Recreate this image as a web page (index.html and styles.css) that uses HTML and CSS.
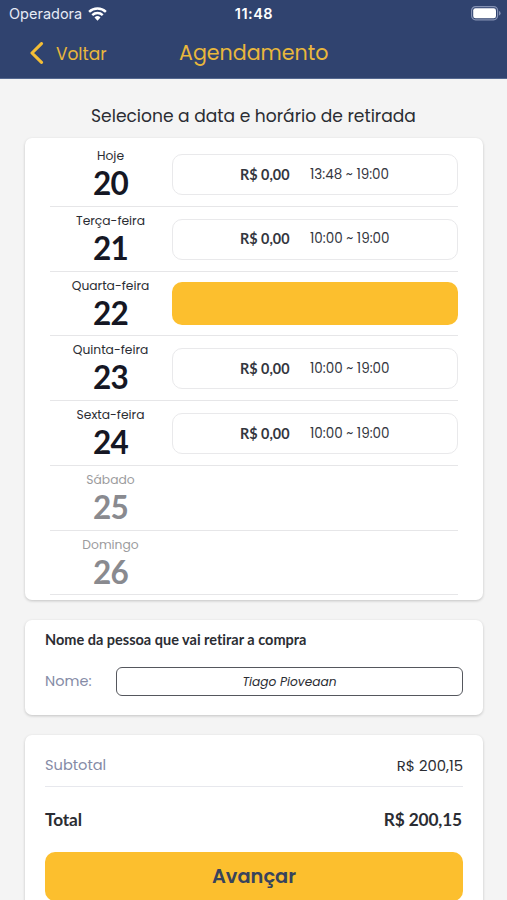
FILE: index.html
```html
<!DOCTYPE html>
<html lang="pt-BR">
<head>
<meta charset="utf-8">
<title>Agendamento</title>
<link rel="stylesheet" href="styles.css">
</head>
<body>
<header class="header">
  <div class="status">
    <div class="carrier"><span>Operadora</span>
      <svg class="wifi" viewBox="0 0 20 15" width="19" height="14"><g fill="none" stroke="#fff" stroke-width="2.6"><path d="M1 5.2a13 13 0 0 1 18 0"/><path d="M4.4 8.8a8 8 0 0 1 11.2 0"/></g><path d="M10 14.6 6.800 11.300a4.600 4.600 0 0 1 6.400 0z" fill="#fff"/></svg>
    </div>
    <div class="clock">11:48</div>
    <svg class="battery" viewBox="0 0 30 15" width="30" height="15"><rect x=".6" y=".6" width="26" height="13.2" rx="4" fill="none" stroke="#8491b3" stroke-width="1.2"/><rect x="2.2" y="2.2" width="22.8" height="10" rx="2.3" fill="#fff"/><path d="M28 5v4.600q1.600-.6 1.600-2.300T28 5z" fill="#8491b3"/></svg>
  </div>
  <nav class="nav">
    <a class="back"><svg viewBox="0 0 14 22" width="14" height="22"><path d="M11.500 1.600 2 11l9.500 9.400" fill="none" stroke="#f3bd36" stroke-width="3.100" stroke-linecap="round" stroke-linejoin="round"/></svg><span>Voltar</span></a>
    <h1>Agendamento</h1>
  </nav>
</header>
<main>
  <h2 class="lead"><span>Selecione a data e horário de retirada</span></h2>
  <section class="card days">
    <div class="day"><div class="date"><span>Hoje</span><b>20</b></div><div class="slot"><b>R$ 0,00</b><span>13:48 ~ 19:00</span></div></div>
    <div class="day"><div class="date"><span>Terça-feira</span><b>21</b></div><div class="slot"><b>R$ 0,00</b><span>10:00 ~ 19:00</span></div></div>
    <div class="day"><div class="date"><span>Quarta-feira</span><b>22</b></div><div class="slot selected"></div></div>
    <div class="day"><div class="date"><span>Quinta-feira</span><b>23</b></div><div class="slot"><b>R$ 0,00</b><span>10:00 ~ 19:00</span></div></div>
    <div class="day"><div class="date"><span>Sexta-feira</span><b>24</b></div><div class="slot"><b>R$ 0,00</b><span>10:00 ~ 19:00</span></div></div>
    <div class="day off"><div class="date"><span>Sábado</span><b>25</b></div></div>
    <div class="day off"><div class="date"><span>Domingo</span><b>26</b></div></div>
  </section>
  <section class="card person">
    <h3>Nome da pessoa que vai retirar a compra</h3>
    <div class="field"><label>Nome:</label><div class="input"><span>Tiago Pioveaan</span></div></div>
  </section>
  <section class="card summary">
    <div class="subtotal"><span class="label">Subtotal</span><span class="amount">R$ 200,15</span></div>
    <div class="total"><span>Total</span><span>R$ 200,15</span></div>
    <div class="next"><span>Avançar</span></div>
  </section>
</main>
</body>
</html>
```
FILE: styles.css
```css
* { box-sizing: border-box; }
html { overflow: hidden; }
body { margin: 0; width: 507px; height: 900px; overflow: hidden; background: #f4f4f4; color: #2b2d33; font-family: Poppins, Inter, sans-serif; }
h1, h2, h3 { margin: 0; font-weight: 400; }
span { white-space: nowrap; }
.header { height: 79px; background: #30436f; border-bottom: 1px solid #54688f; }
.status { height: 27px; display: grid; grid-template-columns: 1fr auto 1fr; align-items: center; padding: 0 6px 0 9px; color: #fff; }
.carrier { display: flex; align-items: center; gap: 6px; font: 400 14.5px/27px Inter, sans-serif; color: #e6eaf5; }
.clock { font: 600 14.5px/27px Inter, sans-serif; letter-spacing: .5px; margin-right: 2px; }
.battery { justify-self: end; }
.nav { height: 51px; display: grid; grid-template-columns: 179px 1fr; align-items: center; color: #e9b73c; }
.back { display: flex; align-items: center; gap: 12.5px; padding-left: 29.500px; font-size: 17px; line-height: 24px; }
.back span { padding-top: 2px; }
.nav h1 { font-size: 20.6px; line-height: 30px; }
.lead { height: 59px; padding-top: 25px; text-align: center; font-size: 17.1px; line-height: 24px; }
.card { width: 458px; margin-left: 25px; background: #fff; border-radius: 7px; box-shadow: 0 1px 3px rgba(0, 0, 0, .2); }
.days { height: 462px; padding: 4px 25px 0; }
.day { height: 64.75px; border-bottom: 1.500px solid #e6e6e8; display: flex; }
.date { width: 121px; display: flex; flex-direction: column; align-items: center; padding-top: 5px; }
.date span { font-size: 12.3px; line-height: 18px; }
.date b { font: 700 31.5px/36px Lato, sans-serif; letter-spacing: -.8px; color: #151724; }
.slot { width: 286px; height: 41px; margin: 12px 0 0 1px; border: 1.500px solid #e9e9eb; border-radius: 10px; display: flex; align-items: center; padding-left: 67px; gap: 20.5px; color: #33363e; }
.slot b { font: 700 14.4px/20px Lato, sans-serif; }
.slot span { font-size: 13.5px; }
.slot.selected { height: 43px; margin-top: 10px; background: #fcbf2e; border: 0; }
.off .date span { color: #9b9b9d; }
.off .date b { color: #898a8f; }
.person { height: 95px; margin-top: 20px; padding: 9px 20px; }
.person h3 { font: 700 14.5px/22px Lato, sans-serif; font-variant-ligatures: none; }
.field { display: flex; align-items: center; margin-top: 16px; }
.field label { width: 71px; font-size: 14.5px; color: #858ba6; }
.input { flex: 1; height: 29px; border: 1.500px solid #55575d; border-radius: 6px; display: flex; align-items: center; justify-content: center; font-size: 12.2px; font-style: italic; }
.summary { height: 180px; margin-top: 20px; padding: 8px 20px 0; }
.subtotal { height: 44px; padding-top: 2px; border-bottom: 1px solid #e7e8ed; display: flex; justify-content: space-between; align-items: center; }
.label { font-size: 14.6px; color: #858ba6; }
.amount { font-size: 14.8px; }
.total { height: 65px; display: flex; justify-content: space-between; align-items: center; font: 700 17.3px/24px Lato, sans-serif; letter-spacing: -.15px; padding-right: 1px; }
.next { height: 49px; border-radius: 10px; background: #fcbf2e; color: #38435c; display: flex; align-items: center; justify-content: center; font-size: 19.4px; font-weight: 600; padding-bottom: 1px; }
```
